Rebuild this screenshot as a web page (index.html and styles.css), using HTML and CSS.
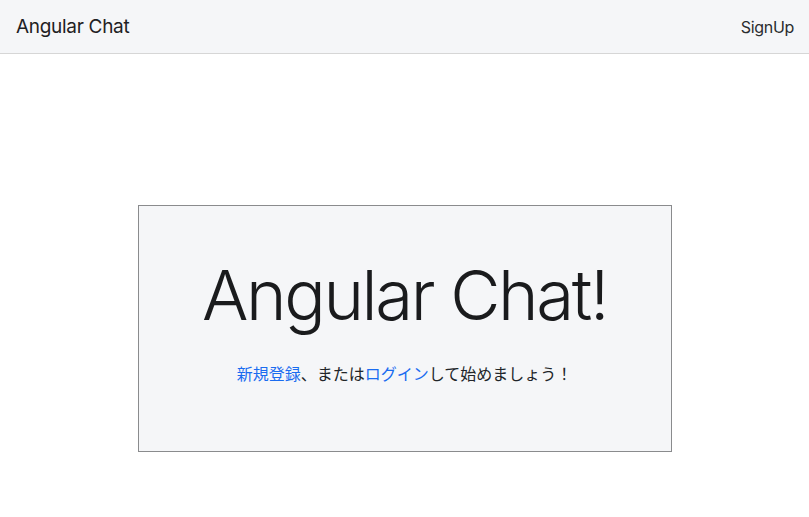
FILE: index.html
```html
<!DOCTYPE html>
<html lang="ja">
<head>
<meta charset="utf-8">
<title>Angular Chat</title>
<link rel="stylesheet" href="styles.css">
</head>
<body>
<nav class="navbar">
  <a class="brand" href="#">Angular Chat</a>
  <a class="nav-link" href="#">SignUp</a>
</nav>
<main class="main">
  <section class="hero">
    <h1 class="title">Angular Chat!</h1>
    <p class="lead"><a href="#">新規登録</a>、または<a href="#">ログイン</a>して始めましょう！</p>
  </section>
</main>
</body>
</html>
```

FILE: styles.css
```css
* { box-sizing: border-box; }
html, body { margin: 0; padding: 0; }
body {
  font-family: Inter, "Noto Sans CJK JP", "Noto Sans", sans-serif;
  color: #212529;
  background: #fff;
}
a { text-decoration: none; }
.navbar {
  height: 54px;
  background: #f5f6f8;
  border-bottom: 1px solid #d6d6d6;
  display: flex;
  align-items: center;
  justify-content: space-between;
  padding: 0 15px 0 16px;
}
.brand {
  font-size: 19px;
  color: #1f2123;
  letter-spacing: -0.3px;
}
.nav-link {
  font-size: 16px;
  color: #2a2c2e;
  letter-spacing: -0.3px;
}
.main {
  display: flex;
  justify-content: center;
  padding-top: 151px;
}
.hero {
  width: 534px;
  height: 247px;
  background: #f5f6f8;
  border: 1px solid #8a8b8d;
  display: flex;
  flex-direction: column;
  align-items: center;
  padding-top: 48px;
}
.title {
  margin: 0;
  font-size: 69px;
  font-weight: 300;
  line-height: 1.2;
  color: #1a1b1d;
  letter-spacing: -2.4px;
}
.lead {
  margin: 24px 0 0;
  font-size: 16px;
  color: #212529;
  letter-spacing: 0;
}
.lead a { color: #1a6cf0; }
```
